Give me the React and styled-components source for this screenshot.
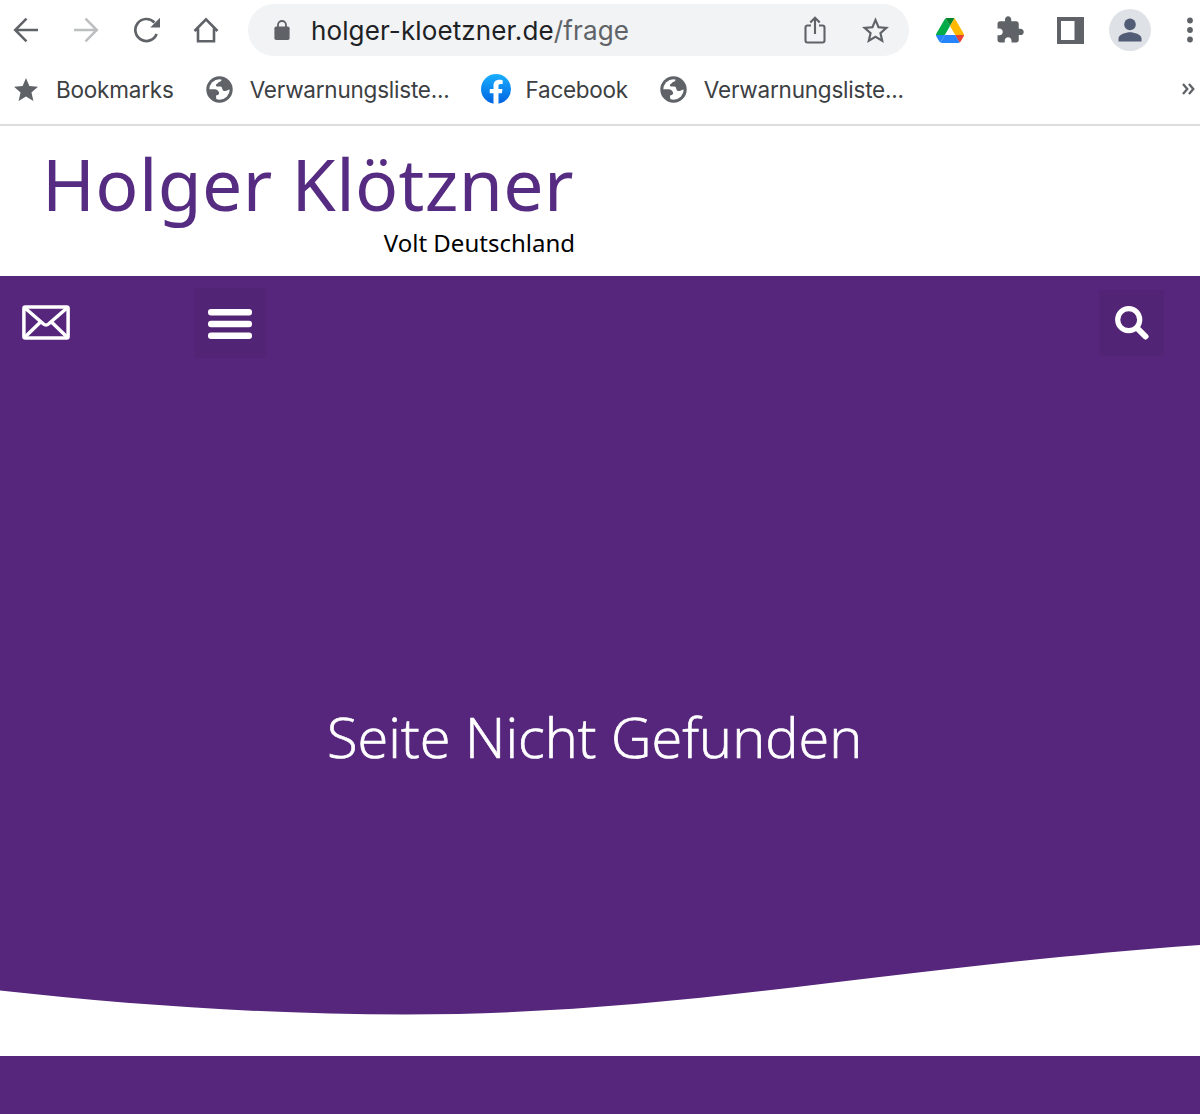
import styled, { createGlobalStyle } from 'styled-components';

const GlobalStyle = createGlobalStyle`
  * {
    box-sizing: border-box;
  }

  body {
    margin: 0;
    background: #fff;
    font-family: Inter, 'Liberation Sans', sans-serif;
  }

  svg {
    display: block;
    flex: 0 0 auto;
  }
`;

const Window = styled.div`
  width: 1200px;
  height: 1114px;
  display: flex;
  flex-direction: column;
  overflow: hidden;
`;

/* Browser chrome */
const Toolbar = styled.div`
  display: flex;
  align-items: center;
  height: 60px;
  padding-left: 6px;
`;

const ToolGroup = styled.div`
  display: flex;
  align-items: center;
  gap: 20px;
  margin-right: ${props => (props.$bleed ? '-10px' : '0')};
`;

const ToolButton = styled.button`
  display: flex;
  align-items: center;
  justify-content: center;
  width: 40px;
  height: 42px;
  padding: 0;
  border: 0;
  background: none;
  color: ${props => (props.$disabled ? '#bcbec0' : '#5f6368')};
`;

const AddressBar = styled.div`
  flex: 1;
  display: flex;
  align-items: center;
  height: 52px;
  margin: 0 21px 0 22px;
  padding: 0 14px 0 26px;
  border-radius: 26px;
  background: #f1f3f4;
  color: #5f6368;
`;

const Url = styled.span`
  flex: 1;
  margin-left: 21px;
  font-size: 26px;
  letter-spacing: 0.12px;
  white-space: nowrap;
  color: #5f6368;
`;

const Host = styled.span`
  color: #202124;
`;

const Avatar = styled.span`
  display: flex;
  align-items: center;
  justify-content: center;
  flex: 0 0 auto;
  width: 42px;
  height: 42px;
  border-radius: 50%;
  background: #dee1e6;
`;

const BookmarksBar = styled.div`
  display: flex;
  align-items: center;
  gap: 31px;
  height: 66px;
  padding: 0 5px 6px 11px;
  border-bottom: 2px solid #dcdddf;
`;

const Bookmark = styled.a`
  display: flex;
  align-items: center;
  gap: 15px;
  color: #3c4043;
  font-size: 22.5px;
  letter-spacing: ${props => props.$tracking}px;
  white-space: nowrap;
`;

const BookmarkIcon = styled.span`
  display: flex;
  align-items: center;
  justify-content: center;
  width: 30px;
  height: 30px;
  color: #5f6368;
`;

const Overflow = styled.span`
  margin-left: auto;
  color: #5f6368;
`;

/* Page */
const Header = styled.header`
  height: 150px;
  padding: 17px 0 0 42px;
  font-family: 'Noto Sans', sans-serif;
`;

const Brand = styled.div`
  width: 533px;
`;

const SiteName = styled.h1`
  margin: 0;
  font-size: 71.5px;
  font-weight: 400;
  line-height: 82px;
  letter-spacing: 0.35px;
  white-space: nowrap;
  color: #562c82;
`;

const Tagline = styled.p`
  margin: 1px 0 0;
  font-size: 24px;
  line-height: 34px;
  text-align: right;
  color: #000;
`;

const Hero = styled.main`
  display: flex;
  flex-direction: column;
  height: 780px;
  background: #55267b;
`;

const NavBar = styled.nav`
  display: flex;
  align-items: flex-start;
  height: 92px;
  padding: 12px 36px 0 22px;
`;

const MailLink = styled.a`
  margin: 17px 124px 0 0;
  color: #fff;
`;

const NavButton = styled.button`
  display: flex;
  align-items: center;
  justify-content: center;
  width: ${props => props.$width}px;
  height: ${props => props.$height}px;
  margin: ${props => (props.$end ? '2px 0 0 auto' : '0')};
  padding: ${props => (props.$end ? '0' : '2px 1px 0 0')};
  border: 0;
  border-radius: 3px;
  background: #512475;
  color: #fff;
`;

const Message = styled.h2`
  margin: 326px 0 0;
  padding-left: 327px;
  font-family: 'Open Sans', sans-serif;
  font-size: 56px;
  font-weight: 300;
  line-height: 84px;
  white-space: nowrap;
  color: #fff;
  -webkit-text-stroke: 0.7px #fff;
`;

const Wave = styled.svg`
  width: 100%;
  height: 120px;
  margin-top: auto;
`;

const Footer = styled.footer`
  flex: 1;
  background: #55267b;
`;

const BackIcon = () => (
  <svg width="26" height="26" viewBox="0 0 26 26" fill="none" stroke="currentColor" strokeWidth="2.5">
    <path d="M25 13H2.5M13.5 1.7 2.2 13l11.3 11.3" />
  </svg>
);

const ForwardIcon = () => (
  <svg width="26" height="26" viewBox="0 0 26 26" fill="none" stroke="currentColor" strokeWidth="2.5">
    <path d="M1 13h22.5M12.5 1.7 23.8 13 12.5 24.3" />
  </svg>
);

const ReloadIcon = () => (
  <svg width="27" height="26" viewBox="0 0 27 26">
    <path d="M23.6 17A11 11 0 1 1 21.400 5.500" fill="none" stroke="currentColor" strokeWidth="2.7" />
    <path d="M27 0.800v9.700h-9.700z" fill="currentColor" />
  </svg>
);

const HomeIcon = () => (
  <svg width="26" height="26" viewBox="0 0 26 26" fill="none" stroke="currentColor" strokeWidth="2.6">
    <path d="M1.5 14 13 2.300 24.500 14M5 11.500v12.800h16V11.500" />
  </svg>
);

const LockIcon = () => (
  <svg width="16" height="20" viewBox="0 0 16 20">
    <rect x="0.4" y="6.500" width="15.2" height="13.500" rx="1.8" fill="currentColor" />
    <path d="M4 8V5a4 4 0 0 1 8 0v3" fill="none" stroke="currentColor" strokeWidth="1.8" />
  </svg>
);

const ShareIcon = () => (
  <svg width="22" height="28" viewBox="0 0 22 28" fill="none" stroke="currentColor" strokeWidth="2.1">
    <path d="M7 9.5H3.5a2 2 0 0 0-2 2v13a2 2 0 0 0 2 2h15a2 2 0 0 0 2-2v-13a2 2 0 0 0-2-2H15M11 18V2.5M6.3 6.5 11 1.8l4.7 4.7" />
  </svg>
);

const StarOutlineIcon = () => (
  <svg width="27" height="27" viewBox="2 2 20 19.5">
    <path
      fill="currentColor"
      d="M22 9.24l-7.19-.62L12 2 9.19 8.63 2 9.24l5.46 4.73L5.82 21 12 17.27 18.18 21l-1.63-7.03L22 9.24zM12 15.4l-3.76 2.27 1-4.28-3.32-2.88 4.38-.38L12 6.1l1.71 4.04 4.38.38-3.32 2.88 1 4.28L12 15.4z"
    />
  </svg>
);

const DriveIcon = () => (
  <svg width="28" height="25" viewBox="0 0 87.3 78">
    <path d="m6.6 66.85 3.85 6.65c.8 1.4 1.95 2.5 3.3 3.3l13.75-23.8h-27.5c0 1.55.4 3.1 1.2 4.5z" fill="#2684fc" />
    <path d="m43.65 25-13.75-23.8c-1.35.8-2.5 1.9-3.3 3.3l-25.4 44a9.06 9.06 0 0 0 -1.2 4.5h27.5z" fill="#00ac47" />
    <path d="m73.55 76.8c1.35-.8 2.5-1.9 3.3-3.3l1.6-2.75 7.65-13.25c.8-1.4 1.2-2.95 1.2-4.5h-27.5l5.85 11.5z" fill="#ea4335" />
    <path d="m43.65 25 13.75-23.8c-1.35-.8-2.9-1.2-4.5-1.2h-18.5c-1.6 0-3.15.45-4.5 1.2z" fill="#00832d" />
    <path d="m59.8 53h-32.3l-13.75 23.8c1.35.8 2.9 1.2 4.5 1.2h50.8c1.6 0 3.15-.45 4.5-1.2z" fill="#2684fc" />
    <path d="m73.4 26.5-12.7-22c-.8-1.4-1.95-2.5-3.3-3.3l-13.75 23.8 16.15 28h27.45c0-1.55-.4-3.1-1.2-4.5z" fill="#ffba00" />
  </svg>
);

const PuzzleIcon = () => (
  <svg width="30" height="30" viewBox="0 0 24 24">
    <path
      fill="currentColor"
      d="M20.5 11H19V7c0-1.1-.9-2-2-2h-4V3.5C13 2.12 11.88 1 10.5 1S8 2.12 8 3.5V5H4c-1.1 0-1.99.9-1.99 2v3.8H3.5c1.49 0 2.7 1.21 2.7 2.7s-1.21 2.7-2.7 2.7H2V20c0 1.1.9 2 2 2h3.8v-1.5c0-1.49 1.21-2.7 2.7-2.7 1.49 0 2.7 1.21 2.7 2.7V22H17c1.1 0 2-.9 2-2v-4h1.5c1.38 0 2.5-1.12 2.5-2.5S21.88 11 20.5 11z"
    />
  </svg>
);

const SidePanelIcon = () => (
  <svg width="27" height="27" viewBox="0 0 27 27">
    <path fill="currentColor" fillRule="evenodd" d="M0 0h27v27H0zM4 4v19h13.5V4z" />
  </svg>
);

const PersonIcon = () => (
  <svg width="24" height="24" viewBox="0 0 24 24" fill="#525d75">
    <circle cx="12" cy="6.4" r="5.8" />
    <path d="M0.5 23.5v-3c0-4.2 7.6-6.3 11.5-6.3s11.5 2.1 11.5 6.3v3z" />
  </svg>
);

const MenuDotsIcon = () => (
  <svg width="8" height="26" viewBox="0 0 8 26" fill="currentColor">
    <circle cx="4" cy="3.5" r="2.9" />
    <circle cx="4" cy="13" r="2.9" />
    <circle cx="4" cy="22.5" r="2.9" />
  </svg>
);

const StarIcon = () => (
  <svg width="24" height="23" viewBox="2 2 20 19">
    <path fill="currentColor" d="M12 17.27 18.18 21l-1.64-7.03L22 9.24l-7.19-.61L12 2 9.19 8.63 2 9.24l5.46 4.73L5.82 21z" />
  </svg>
);

const GlobeIcon = () => (
  <svg width="27" height="27" viewBox="0 0 27 27">
    <circle cx="13.5" cy="13.5" r="13.2" fill="currentColor" />
    <circle cx="13.5" cy="13.5" r="10.2" fill="#fff" />
    <g fill="currentColor">
      <path d="M15.8 2.5c0 2.300-1 3.300-3.300 3.700-.6 1.500-2.600 1.600-2.600 3.100 0 1.700 2.300 1.200 4.200 1.200 1.700.2 2 1.200 2.200 2.500.3 1.300 1.400 2.300 3 2 1.500-.3 2.700-1.600 5.400-1.500C25.500 8 21.500 2.500 15.800 2.500z" />
      <path d="M2.500 13.200h5.700c2.300 0 4.900 1.500 4.900 4.100 0 1.700-1.800 1.900-2.700 2-.8.400 0 2.400 0 4.900C5.500 23 2 18.500 2.500 13.200z" />
    </g>
  </svg>
);

const FacebookIcon = () => (
  <svg width="30" height="30" viewBox="0 0 36 36">
    <defs>
      <linearGradient id="fb" x1="0" y1="0" x2="0" y2="1">
        <stop offset="0" stopColor="#19afff" />
        <stop offset="1" stopColor="#0062e0" />
      </linearGradient>
    </defs>
    <circle cx="18" cy="18" r="18" fill="url(#fb)" />
    <path
      fill="#fff"
      d="M25 23l.8-5H21v-3.5c0-1.4.5-2.5 2.7-2.5H26V7.4c-1.3-.2-2.7-.4-4-.4-4.1 0-7 2.5-7 7v4h-4.5v5H15v12.7c1 .2 2 .3 3 .3s2-.1 3-.3V23z"
    />
  </svg>
);

const ChevronsIcon = () => (
  <svg width="13" height="12" viewBox="0 0 13 12" fill="none" stroke="currentColor" strokeWidth="2.3">
    <path d="M1 1l4.300 5L1 11M7 1l4.300 5L7 11" />
  </svg>
);

const MailIcon = () => (
  <svg width="48" height="35" viewBox="0 0 48 35" fill="none" stroke="currentColor" strokeWidth="3.5">
    <rect x="1.9" y="1.9" width="44.2" height="31.2" rx="1.5" />
    <path d="M3 3l18.500 16q2.500 2 5 0L45 3M3 32l15.500-15M45 32 29.500 17" />
  </svg>
);

const BurgerIcon = () => (
  <svg width="44" height="30" viewBox="0 0 44 30" fill="currentColor">
    <rect width="44" height="6.4" rx="3" />
    <rect y="11.8" width="44" height="6.4" rx="3" />
    <rect y="23.6" width="44" height="6.4" rx="3" />
  </svg>
);

const SearchIcon = () => (
  <svg width="34" height="34" viewBox="0 0 34 34" fill="none" stroke="currentColor">
    <circle cx="13.7" cy="13.7" r="11" strokeWidth="5.2" />
    <path d="M23 23l7.5 7.5" strokeWidth="6" strokeLinecap="round" />
  </svg>
);

const BOOKMARKS = [
  { label: 'Bookmarks', icon: <StarIcon />, tracking: -0.2 },
  { label: 'Verwarnungsliste...', icon: <GlobeIcon />, tracking: -0.22 },
  { label: 'Facebook', icon: <FacebookIcon />, tracking: -0.27 },
  { label: 'Verwarnungsliste...', icon: <GlobeIcon />, tracking: -0.22 },
];

export default function App() {
  return (
    <Window>
      <GlobalStyle />
      <Toolbar>
        <ToolGroup>
          <ToolButton><BackIcon /></ToolButton>
          <ToolButton $disabled><ForwardIcon /></ToolButton>
          <ToolButton><ReloadIcon /></ToolButton>
          <ToolButton><HomeIcon /></ToolButton>
        </ToolGroup>
        <AddressBar>
          <LockIcon />
          <Url><Host>holger-kloetzner.de</Host>/frage</Url>
          <ToolGroup>
            <ToolButton><ShareIcon /></ToolButton>
            <ToolButton><StarOutlineIcon /></ToolButton>
          </ToolGroup>
        </AddressBar>
        <ToolGroup $bleed>
          <ToolButton><DriveIcon /></ToolButton>
          <ToolButton><PuzzleIcon /></ToolButton>
          <ToolButton><SidePanelIcon /></ToolButton>
          <ToolButton><Avatar><PersonIcon /></Avatar></ToolButton>
          <ToolButton><MenuDotsIcon /></ToolButton>
        </ToolGroup>
      </Toolbar>
      <BookmarksBar>
        {BOOKMARKS.map((item, index) => (
          <Bookmark key={index} $tracking={item.tracking}>
            <BookmarkIcon>{item.icon}</BookmarkIcon>
            {item.label}
          </Bookmark>
        ))}
        <Overflow><ChevronsIcon /></Overflow>
      </BookmarksBar>

      <Header>
        <Brand>
          <SiteName>Holger Klötzner</SiteName>
          <Tagline>Volt Deutschland</Tagline>
        </Brand>
      </Header>
      <Hero>
        <NavBar>
          <MailLink><MailIcon /></MailLink>
          <NavButton $width={72} $height={70}><BurgerIcon /></NavButton>
          <NavButton $width={65} $height={66} $end><SearchIcon /></NavButton>
        </NavBar>
        <Message>Seite Nicht Gefunden</Message>
        <Wave viewBox="0 0 1200 120" preserveAspectRatio="none">
          <path
            fill="#fff"
            d="M0 54.5C130 69 270 78.5 405 78.5C680 78.5 880 32 1200 9V120H0z"
          />
        </Wave>
      </Hero>
      <Footer />
    </Window>
  );
}
